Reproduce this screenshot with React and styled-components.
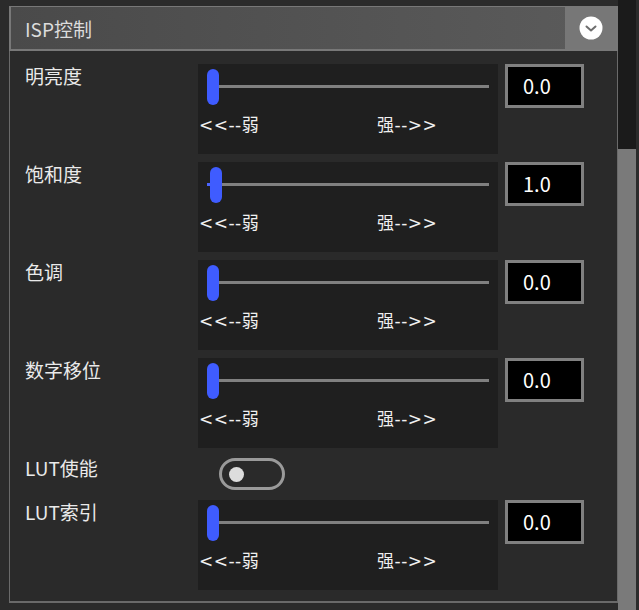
import React from 'react';
import styled, { createGlobalStyle } from 'styled-components';

const GlobalStyle = createGlobalStyle`
  html, body {
    margin: 0;
    padding: 0;
    background: #2b2b2b;
  }
  body {
    font-family: "Noto Sans CJK SC", "Noto Sans", sans-serif;
    color: #e8e8e8;
  }
`;

const Page = styled.div`
  display: flex;
  width: 639px;
  height: 610px;
  overflow: hidden;
  background: #2b2b2b;
`;

const Content = styled.div`
  width: 618px;
  padding: 6px 0 0 9px;
  box-sizing: border-box;
`;

const Scrollbar = styled.div`
  width: 18px;
  height: 610px;
  background: #1b1b1b;
  display: flex;
  flex-direction: column;
  justify-content: flex-end;
`;

const ScrollThumb = styled.div`
  height: 461px;
  background: #7a7a7a;
`;

const Panel = styled.div`
  width: 609px;
  height: 597px;
  box-sizing: border-box;
  border: 1px solid #6a6a6a;
  border-top: none;
  border-bottom-width: 2px;
  background: #2a2a2a;
  display: flex;
  flex-direction: column;
`;

const Header = styled.div`
  height: 45px;
  box-sizing: border-box;
  margin: 0 -1px;
  border: 2px solid #787878;
  border-top-width: 1px;
  background: linear-gradient(90deg, #4a4a4a, #5b5b5b);
  display: flex;
  align-items: stretch;
`;

const Title = styled.div`
  flex: 1;
  display: flex;
  align-items: center;
  padding-left: 14px;
  font-size: 19px;
  color: #dcdcdc;
`;

const ToggleButton = styled.div`
  width: 51px;
  background: #777777;
  display: flex;
  align-items: center;
  justify-content: center;
`;

const Body = styled.div`
  padding: 13px 0 0 15px;
  display: grid;
  grid-template-columns: 166px 300px 79px;
  column-gap: 7px;
  row-gap: 8px;
  align-items: start;
`;

const Label = styled.div`
  font-size: 19px;
  line-height: 24px;
  color: #eaeaea;
`;

const SliderBox = styled.div`
  height: 90px;
  background: #1f1f1f;
  padding: 5px 9px 0 9px;
  box-sizing: border-box;
`;

const Track = styled.div`
  position: relative;
  height: 36px;
`;

const Rail = styled.div`
  position: absolute;
  left: 0;
  right: 0;
  top: 16px;
  height: 3px;
  background: #808080;
`;

const Fill = styled.div`
  position: absolute;
  left: 0;
  top: 16px;
  height: 3px;
  background: #4a64ff;
`;

const Thumb = styled.div`
  position: absolute;
  top: 0;
  width: 12px;
  height: 36px;
  border-radius: 6px;
  background: #3f5cff;
`;

const Ticks = styled.div`
  display: grid;
  grid-template-columns: 178px auto;
  margin: 8px 0 0 -8px;
  font-family: "DejaVu Sans", "Noto Sans CJK SC", sans-serif;
  font-size: 17px;
  line-height: 24px;
  letter-spacing: 0.5px;
  color: #f0f0f0;

  span {
    font-family: inherit;
  }
`;

const ValueBox = styled.div`
  height: 44px;
  box-sizing: border-box;
  border: 3px solid #808080;
  background: #000;
  color: #fff;
  font-size: 20px;
  display: flex;
  align-items: center;
  padding: 0 0 2px 15px;
`;

const SwitchCell = styled.div`
  height: 36px;
  display: flex;
  align-items: center;
  padding-left: 21px;
`;

const Switch = styled.div`
  width: 66px;
  height: 32px;
  box-sizing: border-box;
  border: 3px solid #9a9a9a;
  border-radius: 16px;
  display: flex;
  align-items: center;
  padding-left: 7px;
`;

const Knob = styled.div`
  width: 15px;
  height: 15px;
  border-radius: 50%;
  background: #dddddd;
`;

const sliders = [
  { label: '明亮度', value: 0 },
  { label: '饱和度', value: 1 },
  { label: '色调', value: 0 },
  { label: '数字移位', value: 0 },
];

function Slider({ value }) {
  const offset = Math.round((value / 100) * 270);
  return (
    <SliderBox>
      <Track>
        <Rail />
        <Fill style={{ width: offset + 2 }} />
        <Thumb style={{ left: offset }} />
      </Track>
      <Ticks>
        <span>&lt;&lt;--弱</span>
        <span>强--&gt;&gt;</span>
      </Ticks>
    </SliderBox>
  );
}

function SliderRow({ label, value }) {
  return (
    <>
      <Label>{label}</Label>
      <Slider value={value} />
      <ValueBox>{value.toFixed(1)}</ValueBox>
    </>
  );
}

export default function App() {
  return (
    <>
      <GlobalStyle />
      <Page>
        <Content>
          <Panel>
            <Header>
              <Title>ISP控制</Title>
              <ToggleButton>
                <svg width="24" height="24" viewBox="0 0 24 24">
                  <circle cx="12" cy="12" r="11.5" fill="#ffffff" />
                  <path d="M7.5 10.5 L12 14.5 L16.5 10.5" fill="none" stroke="#6e6e6e" strokeWidth="2" strokeLinecap="round" strokeLinejoin="round" />
                </svg>
              </ToggleButton>
            </Header>
            <Body>
              {sliders.map(s => (
                <SliderRow key={s.label} label={s.label} value={s.value} />
              ))}
              <Label>LUT使能</Label>
              <SwitchCell>
                <Switch><Knob /></Switch>
              </SwitchCell>
              <div />
              <SliderRow label="LUT索引" value={0} />
            </Body>
          </Panel>
        </Content>
        <Scrollbar>
          <ScrollThumb />
        </Scrollbar>
      </Page>
    </>
  );
}
